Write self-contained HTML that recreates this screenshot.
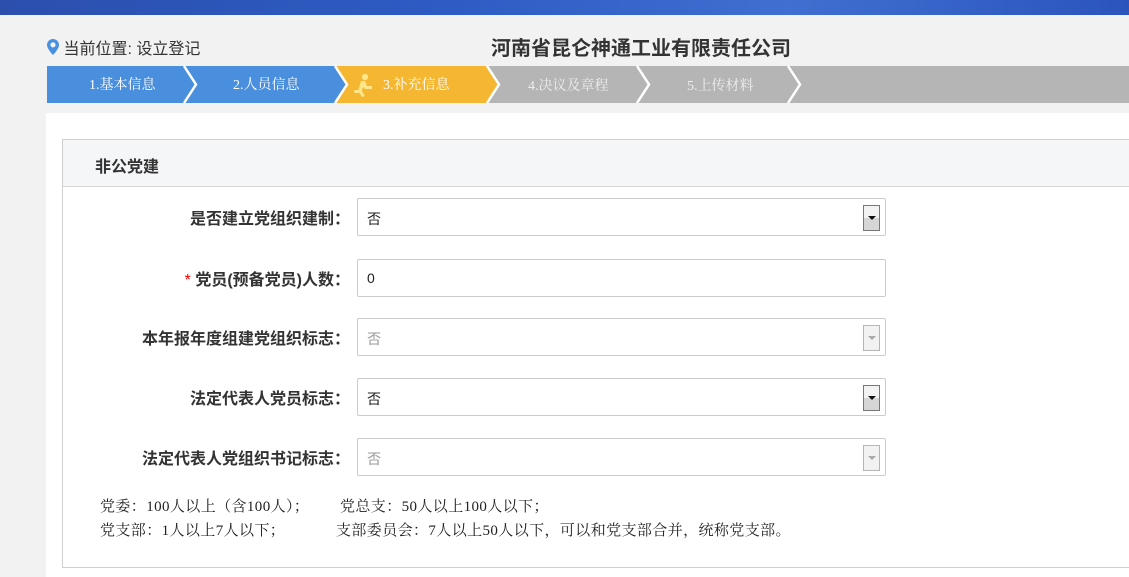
<!DOCTYPE html>
<html><head><meta charset="utf-8"><style>
*{margin:0;padding:0;box-sizing:border-box}
body{width:1129px;height:577px;overflow:hidden;background:#f2f2f2;font-family:"Liberation Sans","Noto Sans CJK SC",sans-serif;position:relative}
.top{position:absolute;left:0;top:0;width:1129px;height:15px;background:linear-gradient(90deg,#2c4fae,#2d5cc4 40%,#3f6fd0 70%,#2b55bd)}
.loc{position:absolute;left:47px;top:35px;font-size:16px;color:#333}
.title{position:absolute;left:491px;top:32px;font-size:20px;font-weight:bold;color:#333}
.steps{position:absolute;left:47px;top:66px}
.white{position:absolute;left:46px;top:113px;width:1083px;height:464px;background:#fff}
.panel{position:absolute;left:62px;top:139px;width:1080px;height:429px;border:1px solid #cfcfcf;background:#fff}
.ph{height:47px;background:#f5f6f8;border-bottom:1px solid #d5d5d5;font-size:16px;font-weight:bold;color:#333;padding:13px 0 0 32px}
.lab{position:absolute;width:320px;left:30px;text-align:right;font-size:16px;color:#333;font-weight:bold;white-space:nowrap}
.lab b{color:#e00;font-weight:normal}
.inp{position:absolute;left:357px;width:529px;height:38px;border:1px solid #ccc;border-radius:2px;background:#fff;font-size:14px;color:#222;padding:10px 0 0 9px}
.inp.dis{color:#999}
.btn{position:absolute;right:5px;top:6px;width:17px;height:26px;border:1px solid #777;background:linear-gradient(#f3f3f3 50%,#d6d6d6 50%)}
.btn:after{content:"";position:absolute;left:4px;top:10px;border-left:4px solid transparent;border-right:4px solid transparent;border-top:4px solid #111}
.dis .btn{border-color:#b5b5b5;background:#f2f2f2}
.dis .btn:after{border-top-color:#aaa}
.note{position:absolute;left:100px;font-size:15px;letter-spacing:0.4px;color:#222;font-family:"Liberation Serif","Noto Serif CJK SC",serif;white-space:nowrap}
</style></head><body>
<div class="top"></div>
<div class="loc"><svg width="12" height="16" viewBox="0 0 12 16" style="vertical-align:-1px"><path d="M6 0C2.7 0 0 2.6 0 5.9 0 10 6 16 6 16s6-6 6-10.1C12 2.6 9.3 0 6 0z" fill="#4a90e2"/><circle cx="6" cy="5.8" r="2.6" fill="#f2f2f2"/></svg> 当前位置: 设立登记</div>
<div class="title">河南省昆仑神通工业有限责任公司</div>
<div class="white"></div>
<svg class="steps" width="1082" height="37" viewBox="0 0 1082 37">
<rect x="0" y="0" width="1082" height="37" fill="#b5b5b5"/>
<polygon points="0,0 440,0 452,18.5 440,37 0,37" fill="#f5b731"/>
<polygon points="0,0 288,0 300,18.5 288,37 0,37" fill="#4a8fdd"/>
<g fill="none" stroke="#fff" stroke-width="2.5">
<polyline points="137,0 149,18.5 137,37"/>
<polyline points="288,0 300,18.5 288,37"/>
<polyline points="440,0 452,18.5 440,37"/>
<polyline points="590,0 602,18.5 590,37"/>
<polyline points="741,0 753,18.5 741,37"/>
</g>
<g fill="#fde58a"><circle cx="318" cy="11" r="3.2"/><path d="M314 15 L318 15 L320 20 L325 20 L325 23 L318 23 L316 21 L315 25 L318 30 L315 31 L311 25 Z"/><rect x="307" y="24" width="5" height="3" rx="1.5"/></g>
<g font-size="14" fill="#fff" font-family="Liberation Serif,Noto Serif CJK SC,serif">
<text x="42" y="23">1.基本信息</text>
<text x="186" y="23">2.人员信息</text>
<text x="336" y="23">3.补充信息</text>
<text x="481" y="24" fill="#eee">4.决议及章程</text>
<text x="640" y="24" fill="#eee">5.上传材料</text>
</g>
</svg>
<div class="panel"><div class="ph">非公党建</div></div>
<div class="lab" style="top:205px">是否建立党组织建制：</div>
<div class="inp" style="top:198px">否<div class="btn"></div></div>
<div class="lab" style="top:266px"><b>*</b> 党员(预备党员)人数：</div>
<div class="inp" style="top:259px">0</div>
<div class="lab" style="top:325px">本年报年度组建党组织标志：</div>
<div class="inp dis" style="top:318px">否<div class="btn"></div></div>
<div class="lab" style="top:385px">法定代表人党员标志：</div>
<div class="inp" style="top:378px">否<div class="btn"></div></div>
<div class="lab" style="top:445px">法定代表人党组织书记标志：</div>
<div class="inp dis" style="top:438px">否<div class="btn"></div></div>
<div class="note" style="top:495px">党委：100人以上（含100人）；<span style="position:absolute;left:240px">党总支：50人以上100人以下；</span></div>
<div class="note" style="top:519px">党支部：1人以上7人以下；<span style="position:absolute;left:236px">支部委员会：7人以上50人以下，可以和党支部合并，统称党支部。</span></div>
</body></html>
